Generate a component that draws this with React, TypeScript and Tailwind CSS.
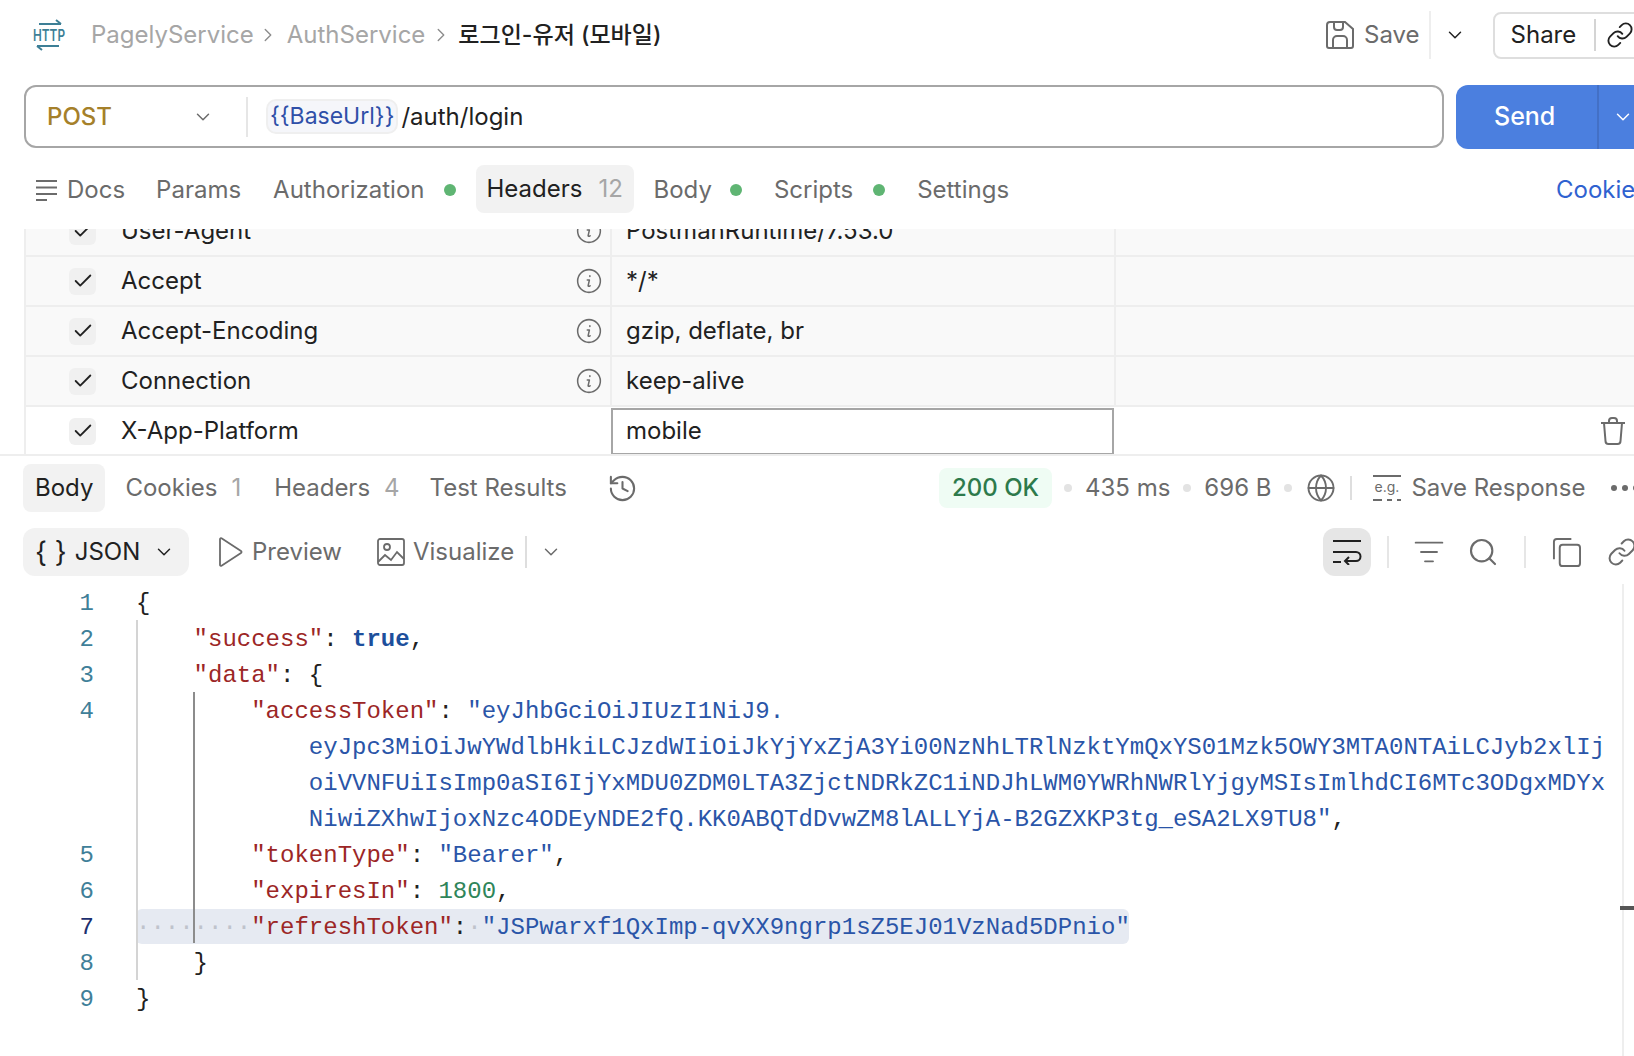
import { ChevronDown, ChevronRight, Check, Link, Globe, Search, ListFilter, History } from 'lucide-react'

const sans = { fontFamily: 'Inter, "Noto Sans CJK KR", sans-serif' }

const headers = [
  { key: 'User-Agent', value: 'PostmanRuntime/7.53.0' },
  { key: 'Accept', value: '*/*' },
  { key: 'Accept-Encoding', value: 'gzip, deflate, br' },
  { key: 'Connection', value: 'keep-alive' },
]

function Chev({ className = '' }: { className?: string }) {
  return <ChevronDown className={`w-[22px] h-[22px] shrink-0 ${className}`} strokeWidth={1.6} />
}

function Info() {
  return (
    <svg viewBox="0 0 24 24" className="w-[26px] h-[26px] text-[#6b6b6b]" fill="none" stroke="currentColor" strokeWidth="1.4">
      <circle cx="12" cy="12" r="10.500" />
      <path d="M12.800 7.200v.6M10.400 11h2l-1.200 5.200c-.1.7.6 1 1.800.2" strokeLinecap="round" strokeLinejoin="round" />
    </svg>
  )
}

function Dot() {
  return <span className="block w-2 h-2 rounded-full bg-[#e3e3e3] shrink-0" />
}

function Key({ children }: { children: string }) {
  return <span className="text-[#9c2626]">{children}</span>
}

function Str({ children }: { children: string }) {
  return <span className="text-[#2a55a8]">{children}</span>
}

function CodeRow({ num, active, children }: { num?: number; active?: boolean; children?: React.ReactNode }) {
  return (
    <div className="flex h-9 leading-[38px] whitespace-pre">
      <div className={`w-[94px] shrink-0 text-right ${active ? 'text-[#1c2f6f]' : 'text-[#3f7f99]'}`}>{num}</div>
      <div className={`ml-[42px] ${active ? 'bg-[#e6eaf2] rounded-md w-[993px] h-[35px]' : ''}`}>{children}</div>
    </div>
  )
}

export default function App() {
  return (
    <div className="relative w-[1634px] h-[1056px] overflow-hidden bg-white text-[24px] text-[#212121]" style={sans}>
      {/* top bar */}
      <div className="flex items-center h-[70px] whitespace-nowrap">
        <svg viewBox="0 0 36 32" className="ml-[31px] w-[36px] h-[32px] shrink-0 text-[#3d7f96]" fill="none" stroke="currentColor" strokeWidth="2">
          <path d="M8 5h22M25 1l5 4" />
          <text x="18" y="22" textAnchor="middle" fontSize="16" fontWeight="600" fill="currentColor" stroke="none" textLength="32" lengthAdjust="spacingAndGlyphs" fontFamily="Inter">HTTP</text>
          <path d="M6 27h22M11 31l-5-4" />
        </svg>
        <span className="ml-[24px] text-[#a6a6a6]">PagelyService</span>
        <ChevronRight className="ml-[3px] w-[22px] h-[22px] text-[#8c8c8c]" strokeWidth={1.5} />
        <span className="ml-[8px] text-[#a6a6a6]">AuthService</span>
        <ChevronRight className="ml-[5px] w-[22px] h-[22px] text-[#8c8c8c]" strokeWidth={1.5} />
        <span className="ml-[6px] text-[23px] font-medium">로그인-유저 (모바일)</span>

        <div className="ml-auto flex items-center shrink-0 w-[309px]">
          <svg viewBox="0 0 30 30" className="w-[30px] h-[30px] shrink-0 text-[#6b6b6b]" fill="none" stroke="currentColor" strokeWidth="2">
            <path d="M5 2h15l8 7v17a2 2 0 0 1-2 2H4a2 2 0 0 1-2-2V5a3 3 0 0 1 3-3z" />
            <path d="M9 3v4a3 3 0 0 0 3 3h3a3 3 0 0 0 3-3V3M8 27v-7a4 4 0 0 1 4-4h6a4 4 0 0 1 4 4v7" />
          </svg>
          <span className="ml-[9px] text-[#6b6b6b]">Save</span>
          <div className="ml-[9px] w-[2px] h-12 shrink-0 bg-[#eeeeee]" />
          <Chev className="ml-[13px] text-[#212121]" />
          <div className="ml-[27px] flex items-center shrink-0 w-[160px] h-[47px] border-2 border-[#dedede] rounded-lg pl-[16px]">
            <span>Share</span>
            <div className="ml-[18px] w-[2px] h-8 bg-[#d4d4d4]" />
            <Link className="ml-[10px] w-[28px] h-[28px] shrink-0" strokeWidth={1.6} />
          </div>
        </div>
      </div>

      {/* url bar */}
      <div className="flex mt-[15px] h-[63px] pl-6">
        <div className="flex items-center shrink-0 w-[1420px] border-2 border-[#a6a6a6] rounded-xl">
          <span className="ml-[21px] w-[145px] shrink-0 font-medium text-[#a5802a]">POST</span>
          <Chev className="text-[#6b6b6b]" />
          <div className="ml-[32px] w-[2px] h-10 bg-[#e6e6e6]" />
          <span className="ml-[18px] h-[35px] leading-[31px] px-[2px] border-2 border-[#efefef] bg-[#f5f6fa] rounded-[10px] text-[23px] text-[#2f4fa8]">{'{{BaseUrl}}'}</span>
          <span className="ml-[3px]">/auth/login</span>
        </div>
        <div className="flex items-center ml-3 w-[200px] h-[64px] bg-[#4b7fdf] rounded-l-xl text-white shrink-0">
          <span className="ml-[38px] w-[103px] text-[25px] font-medium">Send</span>
          <div className="w-[2px] h-full bg-[#4370c6]" />
          <Chev className="ml-[13px]" />
        </div>
      </div>

      {/* request tabs */}
      <div className="flex items-center mt-[17px] h-12 pt-[2px] text-[#6b6b6b] whitespace-nowrap">
        <svg viewBox="0 0 22 22" className="ml-9 w-[22px] h-[22px]" fill="none" stroke="currentColor" strokeWidth="2">
          <path d="M0 2h21M0 8.500h21M0 15h21M0 21h11" />
        </svg>
        <span className="ml-[9px]">Docs</span>
        <span className="ml-[31px]">Params</span>
        <span className="ml-[32px]">Authorization</span>
        <span className="ml-5 w-3 h-3 rounded-full bg-[#5fb573]" />
        <div className="flex items-center ml-5 -mt-[2px] w-[158px] h-12 pl-[10px] rounded-lg bg-[#f2f2f2] text-[#212121]">
          <span>Headers</span>
          <span className="ml-4 text-[#a6a6a6]">12</span>
        </div>
        <span className="ml-[19px]">Body</span>
        <span className="ml-[18px] w-3 h-3 rounded-full bg-[#5fb573]" />
        <span className="ml-8">Scripts</span>
        <span className="ml-5 w-3 h-3 rounded-full bg-[#5fb573]" />
        <span className="ml-8">Settings</span>
        <span className="ml-auto pl-2 w-[86px] shrink-0 text-[#2f62d0] overflow-hidden">Cookies</span>
      </div>

      {/* headers table, scrolled */}
      <div className="mt-4 h-[227px] overflow-hidden border-b-2 border-[#eeeeee] pl-6">
        <div className="-mt-[22px] border-l-2 border-[#eeeeee]">
          {headers.map((row) => (
            <div key={row.key} className="flex items-center h-[50px] border-b-2 border-[#eeeeee] bg-[#f9f9f9]">
              <div className="flex items-center w-[586px] h-full border-r-2 border-[#eeeeee]">
                <span className="ml-[43px] flex items-center justify-center w-[27px] h-[27px] rounded-md bg-[#f0f0f0]"><Check className="w-[22px] h-[22px]" strokeWidth={2} /></span>
                <span className="ml-[25px]">{row.key}</span>
                <span className="ml-auto mr-[8px]"><Info /></span>
              </div>
              <div className="w-[504px] h-full flex items-center pl-[14px] border-r-2 border-[#eeeeee]">{row.value}</div>
            </div>
          ))}
          <div className="flex items-center h-[48px]">
            <div className="flex items-center w-[585px]">
              <span className="ml-[43px] flex items-center justify-center w-[27px] h-[27px] rounded-md bg-[#f0f0f0]"><Check className="w-[22px] h-[22px]" strokeWidth={2} /></span>
              <span className="ml-[25px]">X-App-Platform</span>
            </div>
            <div className="w-[503px] h-[47px] flex items-center pl-[13px] border-2 border-[#a6a6a6]">mobile</div>
            <svg viewBox="0 0 26 28" className="ml-[486px] w-[26px] h-[28px] text-[#6b6b6b]" fill="none" stroke="currentColor" strokeWidth="2">
              <path d="M1 6h24M9 6V4a3 3 0 0 1 3-3h2a3 3 0 0 1 3 3v2M4 6l1.500 18a3 3 0 0 0 3 3h9a3 3 0 0 0 3-3L22 6" />
            </svg>
          </div>
        </div>
      </div>

      {/* response tabs */}
      <div className="flex items-center mt-2 h-12 text-[#6b6b6b] whitespace-nowrap">
        <span className="ml-[23px] flex items-center h-12 px-3 rounded-lg bg-[#f2f2f2] text-[#212121]">Body</span>
        <span className="ml-5">Cookies</span>
        <span className="ml-[14px] text-[#a6a6a6]">1</span>
        <span className="ml-[33px]">Headers</span>
        <span className="ml-[14px] text-[#a6a6a6]">4</span>
        <span className="ml-[30px]">Test Results</span>
        <History className="ml-10 w-[31px] h-[31px]" strokeWidth={1.6} />
        <div className="ml-auto flex items-center w-[695px] shrink-0">
          <span className="flex items-center justify-center shrink-0 w-[113px] h-10 rounded-lg bg-[#effcf4] text-[#2d7a4b] font-medium">200 OK</span>
          <span className="ml-3"><Dot /></span>
          <span className="ml-[13px]">435 ms</span>
          <span className="ml-[13px]"><Dot /></span>
          <span className="ml-[13px]">696 B</span>
          <span className="ml-[13px]"><Dot /></span>
          <Globe className="ml-[14px] w-[30px] h-[30px] shrink-0" strokeWidth={1.5} />
          <div className="ml-[14px] w-[2px] h-6 shrink-0 bg-[#dedede]" />
          <svg viewBox="0 0 30 30" className="ml-5 w-[30px] h-[30px] shrink-0" fill="none" stroke="currentColor" strokeWidth="2">
            <path d="M1 3h28M1 27h9M15 27h5M25 27h4" />
            <text x="15" y="19" textAnchor="middle" fontSize="14" fill="currentColor" stroke="none" fontFamily="Inter">e.g.</text>
          </svg>
          <span className="ml-[9px]">Save Response</span>
          <span className="ml-[26px] flex gap-[5px]">
            <span className="w-[6px] h-[6px] rounded-full bg-[#6b6b6b]" />
            <span className="w-[6px] h-[6px] rounded-full bg-[#6b6b6b]" />
            <span className="w-[6px] h-[6px] rounded-full bg-[#6b6b6b]" />
          </span>
        </div>
      </div>

      {/* format toolbar */}
      <div className="flex items-center mt-4 h-12 text-[#6b6b6b] whitespace-nowrap">
        <div className="ml-[23px] flex items-center w-[166px] h-12 pl-3 rounded-xl bg-[#f2f2f2] text-[#212121]">
          <span className="text-[28px]">{'{ }'}</span>
          <span className="ml-2">JSON</span>
          <Chev className="ml-[13px]" />
        </div>
        <svg viewBox="0 0 26 30" className="ml-7 w-[26px] h-[30px] shrink-0" fill="none" stroke="currentColor" strokeWidth="1.8" strokeLinejoin="round">
          <path d="M3 2v26a1 1 0 0 0 1.500.8L24 16a1.200 1.200 0 0 0 0-2L4.500 1.200A1 1 0 0 0 3 2z" />
        </svg>
        <span className="ml-[9px]">Preview</span>
        <svg viewBox="0 0 28 28" className="ml-[35px] w-[28px] h-[28px] shrink-0" fill="none" stroke="currentColor" strokeWidth="1.8">
          <rect x="1" y="1" width="26" height="26" rx="2" />
          <circle cx="10" cy="9" r="3" />
          <path d="M1 24l7-7 6 5 6-8 7 7" />
        </svg>
        <span className="ml-[8px]">Visualize</span>
        <div className="ml-[11px] w-[2px] h-8 bg-[#dedede]" />
        <Chev className="ml-[13px]" />

        <div className="ml-auto flex items-center w-[311px] shrink-0">
          <span className="flex items-center justify-center shrink-0 w-12 h-12 rounded-xl bg-[#e6e6e6]">
            <svg viewBox="0 0 30 26" className="w-[30px] h-[26px] text-[#212121]" fill="none" stroke="currentColor" strokeWidth="2">
              <path d="M1 2h28M1 13h23a4 4 0 0 1 0 9H13M17 18l-4 4 4 4M1 23h8" />
            </svg>
          </span>
          <div className="ml-4 w-[2px] h-8 shrink-0 bg-[#e6e6e6]" />
          <ListFilter className="ml-[24px] w-[32px] h-[32px] shrink-0" strokeWidth={1.4} />
          <Search className="ml-[22px] w-[32px] h-[32px] shrink-0" strokeWidth={1.6} />
          <div className="ml-[25px] w-[2px] h-8 shrink-0 bg-[#e6e6e6]" />
          <svg viewBox="0 0 30 30" className="ml-[26px] w-[29px] h-[29px] shrink-0" fill="none" stroke="currentColor" strokeWidth="2">
            <rect x="8" y="7" width="21" height="22" rx="3" />
            <path d="M2 22V4a3 3 0 0 1 3-3h15" />
          </svg>
          <Link className="ml-[26px] w-[30px] h-[30px] shrink-0" strokeWidth={1.6} />
        </div>
      </div>

      {/* code */}
      <div className="relative mt-[9px] text-[24px]" style={{ fontFamily: '"Liberation Mono", monospace' }}>
        <CodeRow num={1}>{'{'}</CodeRow>
        <CodeRow num={2}>{'    '}<Key>"success"</Key>: <span className="font-bold text-[#1d4f9c]">true</span>,</CodeRow>
        <CodeRow num={3}>{'    '}<Key>"data"</Key>: {'{'}</CodeRow>
        <CodeRow num={4}>{'        '}<Key>"accessToken"</Key>: <Str>"eyJhbGciOiJIUzI1NiJ9.</Str></CodeRow>
        <CodeRow>{'            '}<Str>eyJpc3MiOiJwYWdlbHkiLCJzdWIiOiJkYjYxZjA3Yi00NzNhLTRlNzktYmQxYS01Mzk5OWY3MTA0NTAiLCJyb2xlIj</Str></CodeRow>
        <CodeRow>{'            '}<Str>oiVVNFUiIsImp0aSI6IjYxMDU0ZDM0LTA3ZjctNDRkZC1iNDJhLWM0YWRhNWRlYjgyMSIsImlhdCI6MTc3ODgxMDYx</Str></CodeRow>
        <CodeRow>{'            '}<Str>NiwiZXhwIjoxNzc4ODEyNDE2fQ.KK0ABQTdDvwZM8lALLYjA-B2GZXKP3tg_eSA2LX9TU8"</Str>,</CodeRow>
        <CodeRow num={5}>{'        '}<Key>"tokenType"</Key>: <Str>"Bearer"</Str>,</CodeRow>
        <CodeRow num={6}>{'        '}<Key>"expiresIn"</Key>: <span className="text-[#2f855a]">1800</span>,</CodeRow>
        <CodeRow num={7} active><span className="text-[#bfc3cc]">········</span><Key>"refreshToken"</Key>:<span className="text-[#bfc3cc]">·</span><Str>"JSPwarxf1QxImp-qvXX9ngrp1sZ5EJ01VzNad5DPnio"</Str></CodeRow>
        <CodeRow num={8}>{'    }'}</CodeRow>
        <CodeRow num={9}>{'}'}</CodeRow>

        {/* indent guides */}
        <div className="absolute left-[136px] top-[35px] w-[2px] h-[360px] bg-[#d4d4d4]" />
        <div className="absolute left-[193px] top-[107px] w-[2px] h-[251px] bg-[#8c8c8c]" />
      </div>

      {/* minimap edge */}
      <div className="absolute left-[1622px] top-[584px] bottom-0 w-[2px] bg-[#eeeeee]" />
      <div className="absolute left-[1620px] top-[906px] w-[14px] h-1 bg-[#555555]" />
    </div>
  )
}
